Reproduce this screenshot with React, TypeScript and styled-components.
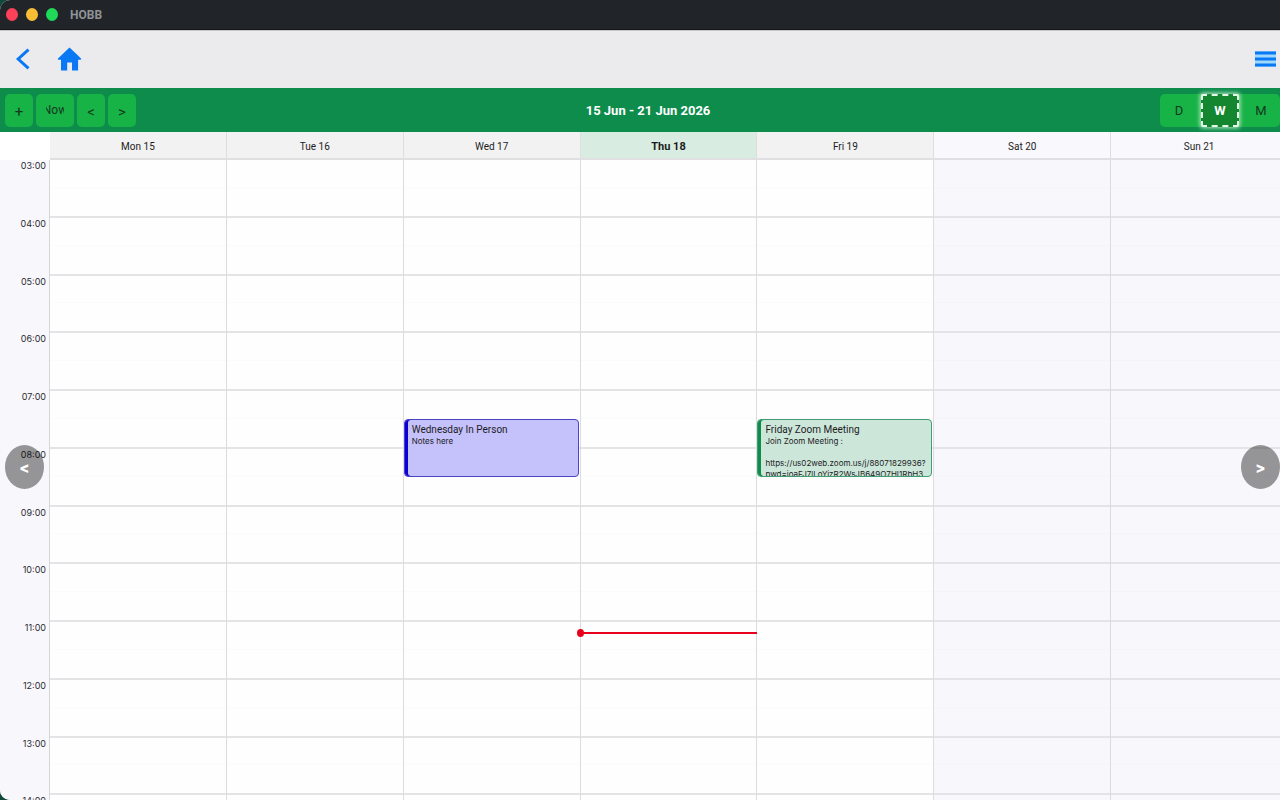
import React from 'react';
import styled, { createGlobalStyle, css } from 'styled-components';

const FIRST_HOUR = 3;
const HOURS = Array.from({ length: 12 }, (_, i) => FIRST_HOUR + i);
const NOW = 11.17;

type CalendarEvent = {
  title: string;
  notes: string;
  start: number;
  end: number;
  tone: 'blue' | 'green';
};

type Day = {
  label: string;
  today?: boolean;
  weekend?: boolean;
  events: CalendarEvent[];
};

const DAYS: Day[] = [
  { label: 'Mon 15', events: [] },
  { label: 'Tue 16', events: [] },
  {
    label: 'Wed 17',
    events: [{ title: 'Wednesday In Person', notes: 'Notes here', start: 7.5, end: 8.5, tone: 'blue' }],
  },
  { label: 'Thu 18', today: true, events: [] },
  {
    label: 'Fri 19',
    events: [
      {
        title: 'Friday Zoom Meeting',
        notes:
          'Join Zoom Meeting :\n\nhttps://us02web.zoom.us/j/88071829936?\npwd=joaFJ7lLoYizR2WsJB649O7HI1RbH3',
        start: 7.5,
        end: 8.5,
        tone: 'green',
      },
    ],
  },
  { label: 'Sat 20', weekend: true, events: [] },
  { label: 'Sun 21', weekend: true, events: [] },
];

const offset = (hour: number) => `${((hour - FIRST_HOUR) / HOURS.length) * 100}%`;
const span = (hours: number) => `${(hours / HOURS.length) * 100}%`;

const GlobalStyle = createGlobalStyle`
  *, *::before, *::after { box-sizing: border-box; }
  body {
    margin: 0;
    background: #0f4a3c;
    font-family: Roboto, "Liberation Sans", sans-serif;
    color: #1c1c1e;
  }
  button { font-family: inherit; border: 0; margin: 0; padding: 0; cursor: pointer; }
`;

const Window = styled.div`
  display: flex;
  flex-direction: column;
  height: 100vh;
  overflow: hidden;
  background: #ffffff;
  border-radius: 10px 0 0 10px;
`;

const TitleBar = styled.header`
  display: flex;
  align-items: center;
  flex: none;
  gap: 8px;
  height: 30px;
  padding-left: 6px;
  background: #212529;
  border-bottom: 1px solid #15181a;
`;

const TrafficLight = styled.button<{ $color: string }>`
  width: 12px;
  height: 13px;
  border-radius: 50%;
  background: ${(p) => p.$color};
`;

const AppName = styled.h1`
  margin: 0 0 0 4px;
  padding-top: 1px;
  font-size: 12px;
  line-height: 16px;
  font-weight: 700;
  color: #909396;
`;

const NavBar = styled.nav`
  display: flex;
  align-items: center;
  flex: none;
  height: 58px;
  padding: 0 4px 2px 14px;
  gap: 25px;
  background: #ebeaec;
  border-top: 1px solid #c4c4c8;
`;

const IconButton = styled.button<{ $end?: boolean }>`
  display: flex;
  background: none;
  color: #0a78f5;
  ${(p) => p.$end && css`margin-left: auto;`}
`;

const Toolbar = styled.div`
  display: flex;
  align-items: center;
  justify-content: space-between;
  flex: none;
  height: 44px;
  padding-left: 5px;
  background: #0d8c4c;
`;

const ButtonRow = styled.div`
  display: flex;
  gap: 3px;
`;

const ToolButton = styled.button<{ $wide?: boolean }>`
  display: flex;
  align-items: center;
  justify-content: center;
  width: ${(p) => (p.$wide ? 38 : 28)}px;
  height: 33px;
  border-radius: 5px;
  background: #17b347;
  color: #14391f;
  font-size: 15px;
  line-height: 16px;
  padding-top: ${(p) => (p.$wide ? 0 : 3)}px;
`;

const ClippedLabel = styled.span`
  display: flex;
  justify-content: center;
  width: 18px;
  overflow: hidden;
  font-size: 12px;
`;

const RangeTitle = styled.h2`
  margin: 0;
  padding-top: 2px;
  font-size: 13px;
  line-height: 16px;
  font-weight: 700;
  color: #ffffff;
`;

const ViewSwitch = styled.div`
  display: flex;
  align-items: center;
  height: 33px;
  border-radius: 5px;
  background: #17b347;
`;

const ViewButton = styled.button<{ $active?: boolean }>`
  width: 38px;
  height: 33px;
  padding-top: 2px;
  background: none;
  color: #14391f;
  font-size: 13px;
  line-height: 16px;
  ${(p) =>
    p.$active &&
    css`
      margin: 0 3px;
      border: 2px dashed #e6f5e9;
      border-radius: 2px;
      background: #14862f;
      box-shadow: 0 0 4px 1px #b9ecc6;
      color: #ffffff;
      font-weight: 700;
    `}
`;

const Calendar = styled.main`
  position: relative;
  flex: 1;
  min-height: 0;
  overflow: hidden;
`;

const WeekGrid = styled.div`
  display: grid;
  grid-template-columns: 50px repeat(7, 1fr);
  margin-right: -8px;
`;

const DayHeader = styled.div<{ $today?: boolean; $weekend?: boolean }>`
  display: flex;
  align-items: center;
  justify-content: center;
  height: 28px;
  padding-top: 4px;
  border-right: 1px solid #dedee0;
  border-bottom: 2px solid #e0e0e2;
  background: ${(p) => (p.$today ? '#d8ece1' : p.$weekend ? '#f9f8fc' : '#f2f2f2')};
  font-size: ${(p) => (p.$today ? 11 : 10)}px;
  line-height: 14px;
  font-weight: ${(p) => (p.$today ? 700 : 400)};
`;

const Hours = styled.div`
  display: grid;
  grid-template-rows: repeat(12, 1fr);
  height: 693px;
  background: #f8f7fc;
  border-right: 1px solid #d6d6da;
`;

const HourLabel = styled.div`
  padding-right: 3px;
  text-align: right;
  font-family: Inter, "Liberation Sans", sans-serif;
  font-size: 9px;
  line-height: 11px;
  color: #2c2c30;
`;

const DayColumn = styled.div<{ $weekend?: boolean }>`
  position: relative;
  display: grid;
  grid-template-rows: repeat(12, 1fr);
  height: 693px;
  border-right: 1px solid #dcdcdf;
  background: ${(p) => (p.$weekend ? '#f8f7fc' : '#fefefe')};
`;

const HourSlot = styled.div`
  border-bottom: 2px solid #e4e4e6;
  &::before {
    content: '';
    display: block;
    height: 50%;
    border-bottom: 1px solid rgba(0, 0, 0, 0.01);
  }
`;

const TONES = {
  blue: { border: '#4a43c4', bar: '#0a00d6', fill: '#c5c1fa' },
  green: { border: '#3f9f72', bar: '#0d8c4c', fill: '#cde6da' },
};

const EventCard = styled.article<{ $tone: 'blue' | 'green' }>`
  position: absolute;
  left: 0;
  right: 1px;
  overflow: hidden;
  margin-top: -1px;
  padding: 4px 2px 0 7px;
  border: 1px solid ${(p) => TONES[p.$tone].border};
  border-radius: 4px;
  background: ${(p) => TONES[p.$tone].fill};
  box-shadow: inset 3px 0 0 ${(p) => TONES[p.$tone].bar};
`;

const EventTitle = styled.h3`
  margin: 0;
  font-size: 10px;
  line-height: 12px;
  font-weight: 400;
  white-space: nowrap;
`;

const EventNotes = styled.p`
  margin: 0;
  font-family: Inter, "Liberation Sans", sans-serif;
  font-size: 8px;
  line-height: 11px;
  white-space: pre;
`;

const NowLine = styled.div`
  position: absolute;
  left: -1px;
  right: -1px;
  height: 2px;
  background: #e8001c;
  &::before {
    content: '';
    position: absolute;
    left: -3px;
    top: -3px;
    width: 7px;
    height: 8px;
    border-radius: 50%;
    background: #e8001c;
  }
`;

const PagerButton = styled.button<{ $side: 'left' | 'right' }>`
  position: absolute;
  top: calc(50% - 21px);
  ${(p) => (p.$side === 'left' ? 'left: 5px;' : 'right: 0;')}
  width: 39px;
  height: 44px;
  padding-top: 2px;
  border-radius: 50%;
  background: rgba(0, 0, 0, 0.4);
  color: #ffffff;
  font-family: Inter, "Liberation Sans", sans-serif;
  font-size: 15px;
  line-height: 16px;
  font-weight: 800;
`;

export default function App() {
  return (
    <Window>
      <GlobalStyle />
      <TitleBar>
        <TrafficLight $color="#fb4159" aria-label="Close" />
        <TrafficLight $color="#f9be34" aria-label="Minimize" />
        <TrafficLight $color="#20d958" aria-label="Zoom" />
        <AppName>HOBB</AppName>
      </TitleBar>
      <NavBar>
        <IconButton aria-label="Back">
          <svg width="18" height="24" viewBox="0 0 18 24" fill="none" stroke="currentColor" strokeWidth="3">
            <path d="M14.500 2.700 4.200 12l10.300 9.300" />
          </svg>
        </IconButton>
        <IconButton aria-label="Home">
          <svg width="25" height="26" viewBox="0 0 25 26" fill="currentColor">
            <path d="M12.500 1.500 1 12.600c-.4.500-.2 1.100.5 1.100H4V24.500h6.200v-8h4.800v8h6.100V13.700h2.400c.7 0 .9-.6.500-1.100l-3.500-3.500z" />
          </svg>
        </IconButton>
        <IconButton $end aria-label="Menu">
          <svg width="21" height="16" viewBox="0 0 21 16" fill="currentColor">
            <path fill="#9fd8fb" d="M0 0h21v16H0z" />
            <path d="M0 .5h21v3H0zM0 6.500h21v3H0zM0 12.500h21v3H0z" />
          </svg>
        </IconButton>
      </NavBar>
      <Toolbar>
        <ButtonRow>
          <ToolButton aria-label="Add event">+</ToolButton>
          <ToolButton $wide>
            <ClippedLabel>Now</ClippedLabel>
          </ToolButton>
          <ToolButton aria-label="Previous week">&lt;</ToolButton>
          <ToolButton aria-label="Next week">&gt;</ToolButton>
        </ButtonRow>
        <RangeTitle>15 Jun - 21 Jun 2026</RangeTitle>
        <ViewSwitch>
          <ViewButton>D</ViewButton>
          <ViewButton $active>W</ViewButton>
          <ViewButton>M</ViewButton>
        </ViewSwitch>
      </Toolbar>
      <Calendar>
        <WeekGrid>
          <div />
          {DAYS.map((day) => (
            <DayHeader key={day.label} $today={day.today} $weekend={day.weekend}>
              {day.label}
            </DayHeader>
          ))}
          <Hours>
            {HOURS.map((hour) => (
              <HourLabel key={hour}>{String(hour).padStart(2, '0')}:00</HourLabel>
            ))}
          </Hours>
          {DAYS.map((day) => (
            <DayColumn key={day.label} $weekend={day.weekend}>
              {HOURS.map((hour) => (
                <HourSlot key={hour} />
              ))}
              {day.events.map((event) => (
                <EventCard
                  key={event.title}
                  $tone={event.tone}
                  style={{ top: offset(event.start), height: span(event.end - event.start) }}
                >
                  <EventTitle>{event.title}</EventTitle>
                  <EventNotes>{event.notes}</EventNotes>
                </EventCard>
              ))}
              {day.today && <NowLine style={{ top: offset(NOW) }} />}
            </DayColumn>
          ))}
        </WeekGrid>
        <PagerButton $side="left" aria-label="Previous">&lt;</PagerButton>
        <PagerButton $side="right" aria-label="Next">&gt;</PagerButton>
      </Calendar>
    </Window>
  );
}
